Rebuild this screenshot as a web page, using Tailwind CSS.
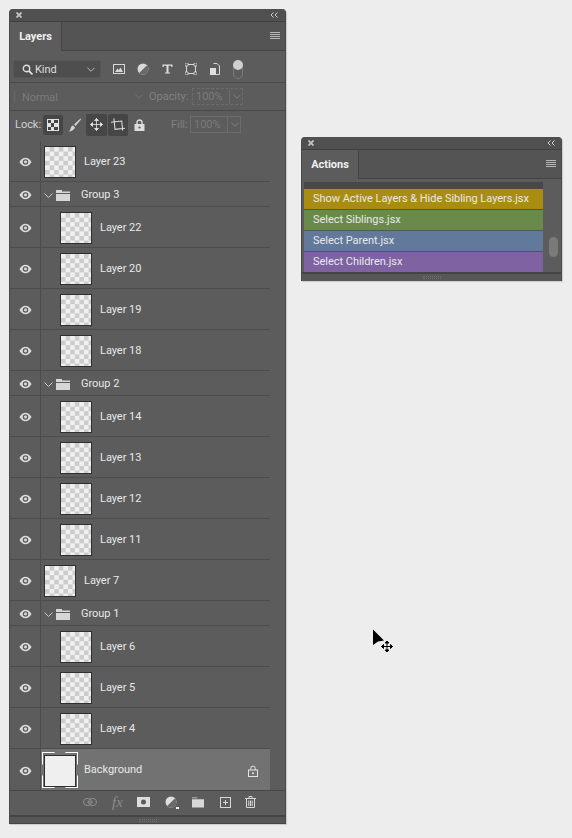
<!DOCTYPE html>
<html><head><meta charset="utf-8"><script src="https://cdn.jsdelivr.net/npm/@tailwindcss/browser@4"></script></head>
<body class="bg-[#ededed] w-[572px] h-[838px] overflow-hidden relative font-['Roboto','Liberation_Sans',sans-serif] text-[11px] tracking-[-0.03px] text-[#e8e8e8] [&_span]:translate-y-px">
<svg class="hidden"><defs>
<symbol id="eye" viewBox="0 0 14 10"><path d="M0.5 5C2.5 1.8 4.6 0.5 7 0.5S11.5 1.8 13.5 5C11.5 8.2 9.4 9.5 7 9.5S2.5 8.2 0.5 5Z" fill="#dcdcdc"/><circle cx="7" cy="5" r="3" fill="#5a5a5a"/><circle cx="7" cy="5" r="1.6" fill="#dcdcdc"/></symbol>
<symbol id="folder" viewBox="0 0 14 11"><path d="M0 0H6V1.5H14V3H0Z M0 4H14V11H0Z" fill="#d6d6d6"/></symbol>
<symbol id="chev" viewBox="0 0 9 5"><path d="M0.5 0.5L4.5 4.5L8.5 0.5" fill="none" stroke="#c8c8c8"/></symbol>
<symbol id="lines" viewBox="0 0 10 8"><path d="M0 .5H10M0 2.5H10M0 4.5H10M0 6.5H10" stroke="#b8b8b8"/></symbol>
<symbol id="x" viewBox="0 0 6 6"><path d="M.5 .5L5.5 5.5M5.5 .5L.5 5.5" stroke="#c4c4c4" stroke-width="1.8"/></symbol>
<symbol id="dbl" viewBox="0 0 8 6"><path d="M3.5 .5L1 3L3.5 5.5M7.5 .5L5 3L7.5 5.5" fill="none" stroke="#d0d0d0"/></symbol>
</defs></svg>

<!-- Layers panel -->
<div class="absolute left-[9px] top-[9px] w-[277px] h-[815px] rounded-t-[4px] bg-[#5c5c5c] border-x border-[#4a4a4a] shadow-[1px_1px_1px_#c9c9c9] flex flex-col overflow-hidden">
  <div class="h-[13px] shrink-0 bg-[#505050] border-b border-[#404040] flex items-center justify-between pl-[6px] pr-[7px]">
    <svg class="w-[6px] h-[6px]"><use href="#x"/></svg>
    <svg class="w-[8px] h-[6px]"><use href="#dbl"/></svg>
  </div>
  <div class="h-[29px] shrink-0 bg-[#545454] border-b border-[#444] flex items-stretch justify-between">
    <div class="w-[52px] -mb-px bg-[#5c5c5c] border-r border-[#444] flex items-center justify-center font-bold text-[#f0f0f0]"><span>Layers</span></div>
    <svg class="w-[10px] h-[8px] self-center mr-[5px]"><use href="#lines"/></svg>
  </div>
  <!-- filter row -->
  <div class="h-[32px] shrink-0 border-b border-[#494949] flex items-center pl-[3px] pt-[5px] relative">
    <div class="w-[88px] h-[18px] rounded-[2px] bg-[#4e4e4e] border border-[#575757] flex items-center pl-[8px] pr-[5px] text-[#dedede]">
      <svg class="w-[11px] h-[11px] mr-[2px]" viewBox="0 0 11 11"><circle cx="4.5" cy="4.5" r="3.2" fill="none" stroke="#ddd" stroke-width="1.4"/><path d="M7 7L10.5 10.5" stroke="#ddd" stroke-width="1.8"/></svg>
      <span>Kind</span>
      <svg class="w-[8px] h-[5px] ml-auto"><use href="#chev"/></svg>
    </div>
    <div class="flex items-center ml-[12px] gap-[12px]">
      <svg class="w-[12px] h-[10px]" viewBox="0 0 12 10"><rect x=".5" y=".5" width="11" height="9" fill="none" stroke="#d8d8d8"/><path d="M2 8L4.5 4.5L6 6L7.5 3.5L10 8Z" fill="#d8d8d8"/></svg>
      <svg class="w-[12px] h-[12px]" viewBox="0 0 12 12"><circle cx="6" cy="6" r="5.5" fill="#d8d8d8"/><path d="M10 2.2A5.5 5.5 0 0 1 2.2 10Z" fill="#6a6a6a"/></svg>
      <svg class="w-[11px] h-[10px] ml-[1px]" viewBox="0 0 11 10"><path d="M0.5 .5H10.5V3H9.5L9 1.8H6.5V8.4H8V9.5H3V8.4H4.5V1.8H2L1.5 3H.5Z" fill="#dedede"/></svg>
      <svg class="w-[12px] h-[12px]" viewBox="0 0 12 12"><rect x="1.5" y="1.5" width="9" height="9" fill="none" stroke="#d8d8d8"/><path d="M0 0H3V3H0ZM9 0H12V3H9ZM0 9H3V12H0ZM9 9H12V12H9Z" fill="#5b5b5b" stroke="#d8d8d8" stroke-width=".8"/></svg>
      <svg class="w-[10px] h-[12px] ml-[1px]" viewBox="0 0 10 12"><path d="M3.5 .5H7L9.5 3V11.5H4" fill="none" stroke="#d8d8d8"/><rect x="0" y="5" width="6" height="7" fill="#dedede"/></svg>
    </div>
    <div class="absolute left-[223px] top-[11px] w-[10px] h-[17px] rounded-full border border-[#7a7a7a]"></div>
    <div class="absolute left-[223px] top-[9px] w-[10px] h-[10px] rounded-full bg-[#d0d0d0]"></div>
  </div>
  <!-- blend row -->
  <div class="h-[28px] shrink-0 border-b border-[#494949] flex items-center pl-[4px] text-[#7b7b7b]">
    <div class="w-[126px] pl-[7px] border-l border-[#6a6a6a] leading-[12px]"><span class="inline-block">Normal</span></div>
    <svg class="w-[8px] h-[5px] -ml-[5px] shrink-0"><use href="#chev" opacity=".25"/></svg>
    <span class="ml-[6px] text-[#808080] w-[43px]">Opacity:</span>
    <div class="w-[51px] h-[17px] flex border border-dashed border-[#6c6c6c]"><div class="w-[37px] pl-[3px] leading-[15px] border-r border-[#6c6c6c]">100%</div><svg class="w-[8px] h-[5px] ml-[3px] self-center"><use href="#chev" opacity=".4"/></svg></div>
  </div>
  <!-- lock row -->
  <div class="h-[30px] shrink-0 flex items-center pl-[5px] pb-[3px] text-[#d2d2d2] relative">
    <span class="w-[27px]">Lock:</span>
    <div class="w-[20px] h-[20px] rounded-[2px] bg-[#464646] flex items-center justify-center ml-[1px]">
      <svg class="w-[12px] h-[12px]" viewBox="0 0 12 12"><rect width="12" height="12" fill="#e2e2e2"/><path d="M1 1H4V4H1ZM7 1H11V4H7ZM4 4H7V8H4ZM1 8H4V11H1ZM7 8H11V11H7Z" fill="#444"/></svg>
    </div>
    <svg class="w-[13px] h-[14px] ml-[5px]" viewBox="0 0 13 14"><path d="M12.5 .5L6 6.5L7.5 8L13 1.5Z M5 7.5L7 9.5C6 12 3 13.5 .5 13.5C2 12.5 2.5 11 3 9.5C3.3 8.5 4 7.8 5 7.5Z" fill="#d6d6d6"/></svg>
    <div class="w-[21px] h-[22px] rounded-[2px] bg-[#464646] flex items-center justify-center ml-[5px]">
      <svg class="w-[13px] h-[13px]" viewBox="0 0 13 13"><path d="M6.5 .5V12.5M.5 6.5H12.5M6.5 .5L4.5 2.5H8.5ZM6.5 12.5L4.5 10.5H8.5ZM.5 6.5L2.5 4.5V8.5ZM12.5 6.5L10.5 4.5V8.5Z" stroke="#e4e4e4" fill="#e4e4e4" stroke-width=".8"/></svg>
    </div>
    <div class="w-[20px] h-[22px] rounded-[2px] bg-[#464646] flex items-center justify-center ml-[1px]">
      <svg class="w-[14px] h-[13px]" viewBox="0 0 14 13"><path d="M3.5 0V11H14M0 3.5H11V13" fill="none" stroke="#e2e2e2" transform="rotate(-6 7 6)"/></svg>
    </div>
    <svg class="w-[11px] h-[12px] ml-[6px]" viewBox="0 0 11 12"><path d="M3 5V3.5A2.5 2.5 0 0 1 8 3.5V5" fill="none" stroke="#dedede" stroke-width="1.4"/><path d="M0.5 5H10.5V12H0.5Z" fill="#dedede"/><circle cx="5.5" cy="8.5" r="1.1" fill="#555"/></svg>
    <span class="absolute left-[161px] text-[#808080]">Fill:</span>
    <div class="absolute left-[180px] w-[51px] h-[17px] flex border border-[#6c6c6c] text-[#7b7b7b]"><div class="w-[37px] pl-[3px] leading-[15px] border-r border-[#6c6c6c]">100%</div><svg class="w-[8px] h-[5px] ml-[3px] self-center"><use href="#chev" opacity=".4"/></svg></div>
  </div>
  <!-- list -->
  <div class="h-[649px] shrink-0 flex flex-col w-[260px] [&_svg]:translate-y-px [&>div:not(:last-child)>div:nth-child(2)]:translate-y-px">
    <div class="h-[41px] shrink-0 border-b border-[#4c4c4c] flex items-center"><div class="w-[31px] h-full border-r border-[#4c4c4c] flex items-center justify-center"><svg class="w-[13px] h-[10px]"><use href="#eye"/></svg></div><div class="ml-[3px] w-[32px] h-[32px] border border-[#2f2f2f] bg-[repeating-conic-gradient(#cccccc_0_25%,#f0f0f0_0_50%)] bg-[length:9.2px_9.2px]"></div><span class="ml-[8px]">Layer 23</span></div>
    <div class="h-[25px] shrink-0 border-b border-[#4c4c4c] flex items-center"><div class="w-[31px] h-full border-r border-[#4c4c4c] flex items-center justify-center"><svg class="w-[13px] h-[10px]"><use href="#eye"/></svg></div><svg class="w-[9px] h-[5px] ml-[3px]"><use href="#chev"/></svg><svg class="w-[14px] h-[11px] ml-[3px]"><use href="#folder"/></svg><span class="ml-[11px]">Group 3</span></div>
    <div class="h-[41px] shrink-0 border-b border-[#4c4c4c] flex items-center"><div class="w-[31px] h-full border-r border-[#4c4c4c] flex items-center justify-center"><svg class="w-[13px] h-[10px]"><use href="#eye"/></svg></div><div class="ml-[19px] w-[32px] h-[32px] border border-[#2f2f2f] bg-[repeating-conic-gradient(#cccccc_0_25%,#f0f0f0_0_50%)] bg-[length:9.2px_9.2px]"></div><span class="ml-[8px]">Layer 22</span></div>
    <div class="h-[41px] shrink-0 border-b border-[#4c4c4c] flex items-center"><div class="w-[31px] h-full border-r border-[#4c4c4c] flex items-center justify-center"><svg class="w-[13px] h-[10px]"><use href="#eye"/></svg></div><div class="ml-[19px] w-[32px] h-[32px] border border-[#2f2f2f] bg-[repeating-conic-gradient(#cccccc_0_25%,#f0f0f0_0_50%)] bg-[length:9.2px_9.2px]"></div><span class="ml-[8px]">Layer 20</span></div>
    <div class="h-[41px] shrink-0 border-b border-[#4c4c4c] flex items-center"><div class="w-[31px] h-full border-r border-[#4c4c4c] flex items-center justify-center"><svg class="w-[13px] h-[10px]"><use href="#eye"/></svg></div><div class="ml-[19px] w-[32px] h-[32px] border border-[#2f2f2f] bg-[repeating-conic-gradient(#cccccc_0_25%,#f0f0f0_0_50%)] bg-[length:9.2px_9.2px]"></div><span class="ml-[8px]">Layer 19</span></div>
    <div class="h-[41px] shrink-0 border-b border-[#4c4c4c] flex items-center"><div class="w-[31px] h-full border-r border-[#4c4c4c] flex items-center justify-center"><svg class="w-[13px] h-[10px]"><use href="#eye"/></svg></div><div class="ml-[19px] w-[32px] h-[32px] border border-[#2f2f2f] bg-[repeating-conic-gradient(#cccccc_0_25%,#f0f0f0_0_50%)] bg-[length:9.2px_9.2px]"></div><span class="ml-[8px]">Layer 18</span></div>
    <div class="h-[25px] shrink-0 border-b border-[#4c4c4c] flex items-center"><div class="w-[31px] h-full border-r border-[#4c4c4c] flex items-center justify-center"><svg class="w-[13px] h-[10px]"><use href="#eye"/></svg></div><svg class="w-[9px] h-[5px] ml-[3px]"><use href="#chev"/></svg><svg class="w-[14px] h-[11px] ml-[3px]"><use href="#folder"/></svg><span class="ml-[11px]">Group 2</span></div>
    <div class="h-[41px] shrink-0 border-b border-[#4c4c4c] flex items-center"><div class="w-[31px] h-full border-r border-[#4c4c4c] flex items-center justify-center"><svg class="w-[13px] h-[10px]"><use href="#eye"/></svg></div><div class="ml-[19px] w-[32px] h-[32px] border border-[#2f2f2f] bg-[repeating-conic-gradient(#cccccc_0_25%,#f0f0f0_0_50%)] bg-[length:9.2px_9.2px]"></div><span class="ml-[8px]">Layer 14</span></div>
    <div class="h-[41px] shrink-0 border-b border-[#4c4c4c] flex items-center"><div class="w-[31px] h-full border-r border-[#4c4c4c] flex items-center justify-center"><svg class="w-[13px] h-[10px]"><use href="#eye"/></svg></div><div class="ml-[19px] w-[32px] h-[32px] border border-[#2f2f2f] bg-[repeating-conic-gradient(#cccccc_0_25%,#f0f0f0_0_50%)] bg-[length:9.2px_9.2px]"></div><span class="ml-[8px]">Layer 13</span></div>
    <div class="h-[41px] shrink-0 border-b border-[#4c4c4c] flex items-center"><div class="w-[31px] h-full border-r border-[#4c4c4c] flex items-center justify-center"><svg class="w-[13px] h-[10px]"><use href="#eye"/></svg></div><div class="ml-[19px] w-[32px] h-[32px] border border-[#2f2f2f] bg-[repeating-conic-gradient(#cccccc_0_25%,#f0f0f0_0_50%)] bg-[length:9.2px_9.2px]"></div><span class="ml-[8px]">Layer 12</span></div>
    <div class="h-[41px] shrink-0 border-b border-[#4c4c4c] flex items-center"><div class="w-[31px] h-full border-r border-[#4c4c4c] flex items-center justify-center"><svg class="w-[13px] h-[10px]"><use href="#eye"/></svg></div><div class="ml-[19px] w-[32px] h-[32px] border border-[#2f2f2f] bg-[repeating-conic-gradient(#cccccc_0_25%,#f0f0f0_0_50%)] bg-[length:9.2px_9.2px]"></div><span class="ml-[8px]">Layer 11</span></div>
    <div class="h-[41px] shrink-0 border-b border-[#4c4c4c] flex items-center"><div class="w-[31px] h-full border-r border-[#4c4c4c] flex items-center justify-center"><svg class="w-[13px] h-[10px]"><use href="#eye"/></svg></div><div class="ml-[3px] w-[32px] h-[32px] border border-[#2f2f2f] bg-[repeating-conic-gradient(#cccccc_0_25%,#f0f0f0_0_50%)] bg-[length:9.2px_9.2px]"></div><span class="ml-[8px]">Layer 7</span></div>
    <div class="h-[25px] shrink-0 border-b border-[#4c4c4c] flex items-center"><div class="w-[31px] h-full border-r border-[#4c4c4c] flex items-center justify-center"><svg class="w-[13px] h-[10px]"><use href="#eye"/></svg></div><svg class="w-[9px] h-[5px] ml-[3px]"><use href="#chev"/></svg><svg class="w-[14px] h-[11px] ml-[3px]"><use href="#folder"/></svg><span class="ml-[11px]">Group 1</span></div>
    <div class="h-[41px] shrink-0 border-b border-[#4c4c4c] flex items-center"><div class="w-[31px] h-full border-r border-[#4c4c4c] flex items-center justify-center"><svg class="w-[13px] h-[10px]"><use href="#eye"/></svg></div><div class="ml-[19px] w-[32px] h-[32px] border border-[#2f2f2f] bg-[repeating-conic-gradient(#cccccc_0_25%,#f0f0f0_0_50%)] bg-[length:9.2px_9.2px]"></div><span class="ml-[8px]">Layer 6</span></div>
    <div class="h-[41px] shrink-0 border-b border-[#4c4c4c] flex items-center"><div class="w-[31px] h-full border-r border-[#4c4c4c] flex items-center justify-center"><svg class="w-[13px] h-[10px]"><use href="#eye"/></svg></div><div class="ml-[19px] w-[32px] h-[32px] border border-[#2f2f2f] bg-[repeating-conic-gradient(#cccccc_0_25%,#f0f0f0_0_50%)] bg-[length:9.2px_9.2px]"></div><span class="ml-[8px]">Layer 5</span></div>
    <div class="h-[41px] shrink-0 border-b border-[#4c4c4c] flex items-center"><div class="w-[31px] h-full border-r border-[#4c4c4c] flex items-center justify-center"><svg class="w-[13px] h-[10px]"><use href="#eye"/></svg></div><div class="ml-[19px] w-[32px] h-[32px] border border-[#2f2f2f] bg-[repeating-conic-gradient(#cccccc_0_25%,#f0f0f0_0_50%)] bg-[length:9.2px_9.2px]"></div><span class="ml-[8px]">Layer 4</span></div>
    <div class="h-[41px] shrink-0 flex items-center relative"><div class="w-[31px] h-full border-r border-[#4c4c4c] flex items-center justify-center"><svg class="w-[13px] h-[10px]"><use href="#eye"/></svg></div><div class="flex-1 h-full bg-[#727272] flex items-center relative"><div class="ml-[3px] w-[32px] h-[32px] border border-[#2f2f2f] bg-[#efefef] translate-y-px"></div><div class="absolute left-[1px] top-[3px] w-[36px] h-[36px] border border-white [clip-path:polygon(0_0,35%_0,35%_8%,65%_8%,65%_0,100%_0,100%_35%,92%_35%,92%_65%,100%_65%,100%_100%,65%_100%,65%_92%,35%_92%,35%_100%,0_100%,0_65%,8%_65%,8%_35%,0_35%)]"></div><span class="ml-[8px]">Background</span><svg class="absolute right-[12px] top-[15px] w-[10px] h-[12px]" viewBox="0 0 10 12"><path d="M2.8 5V3.2A2.2 2.2 0 0 1 7.2 3.2V5" fill="none" stroke="#e4e4e4"/><rect x=".5" y="5" width="9" height="6.5" fill="none" stroke="#e4e4e4"/><circle cx="5" cy="8.2" r="1" fill="#e4e4e4"/></svg></div></div>
  </div>
  <!-- footer -->
  <div class="h-[25px] shrink-0 border-t border-[#464646] flex items-center pl-[73px] pb-[2px]">
    <svg class="w-[14px] h-[8px]" viewBox="0 0 14 8"><rect x=".5" y=".5" width="8" height="7" rx="3.5" fill="none" stroke="#8c8c8c"/><rect x="5.5" y=".5" width="8" height="7" rx="3.5" fill="none" stroke="#8c8c8c"/><path d="M4 4H10" stroke="#8c8c8c"/></svg>
    <div class="ml-[15px] w-[14px] italic text-[15px] leading-none text-[#8c8c8c] font-['Liberation_Serif',serif]">fx</div>
    <svg class="ml-[11px] w-[13px] h-[10px]" viewBox="0 0 13 10"><path fill-rule="evenodd" d="M0 0H13V10H0ZM6.5 2.5A2.5 2.5 0 1 0 6.5 7.5A2.5 2.5 0 1 0 6.5 2.5Z" fill="#dedede"/></svg>
    <svg class="w-[15px] h-[13px] ml-[15px]" viewBox="0 0 15 13"><circle cx="6" cy="6" r="5.5" fill="#dedede"/><path d="M10 2.2A5.5 5.5 0 0 1 2.2 10Z" fill="#6a6a6a"/><rect x="11" y="11" width="3" height="2" fill="#eee"/></svg>
    <svg class="w-[12px] h-[11px] ml-[12px]" viewBox="0 0 13 11"><path d="M0 0H6V1H0ZM0 2H13V11H0Z" fill="#d8d8d8"/></svg>
    <svg class="w-[11px] h-[11px] ml-[16px]" viewBox="0 0 11 11"><rect x=".5" y=".5" width="10" height="10" fill="none" stroke="#d8d8d8"/><path d="M5.5 3V8M3 5.5H8" stroke="#d8d8d8"/></svg>
    <svg class="w-[11px] h-[12px] ml-[14px]" viewBox="0 0 11 12"><path d="M0 2.5H11M4 2V.5H7V2M1.5 3V11.5H9.5V3M3.8 4.5V10M5.5 4.5V10M7.2 4.5V10" fill="none" stroke="#d8d8d8"/></svg>
  </div>
  <div class="h-[8px] shrink-0 border-t-2 border-[#444] bg-[#575757] flex justify-center items-center"><div class="w-[18px] h-[3px] border-y border-dotted border-[#6e6e6e]"></div></div>
  <div class="h-px shrink-0 bg-[#444]"></div>
</div>

<!-- Actions panel -->
<div class="absolute left-[301px] top-[137px] w-[261px] h-[144px] rounded-t-[4px] bg-[#5c5c5c] border-x border-[#4a4a4a] shadow-[1px_1px_1px_#c9c9c9] flex flex-col overflow-hidden">
  <div class="h-[13px] shrink-0 bg-[#505050] border-b border-[#404040] flex items-center justify-between pl-[6px] pr-[6px]">
    <svg class="w-[6px] h-[6px]"><use href="#x"/></svg>
    <svg class="w-[8px] h-[6px]"><use href="#dbl"/></svg>
  </div>
  <div class="h-[29px] shrink-0 bg-[#545454] border-b border-[#444] flex items-stretch justify-between">
    <div class="w-[57px] -mb-px bg-[#5c5c5c] border-r border-[#444] flex items-center justify-center font-bold text-[#f0f0f0]"><span>Actions</span></div>
    <svg class="w-[10px] h-[8px] self-center mr-[5px]"><use href="#lines"/></svg>
  </div>
  <div class="flex-1 min-h-0 flex pl-[2px] relative">
    <div class="w-[239px] pt-[3px] whitespace-nowrap">
      <div class="h-[7px] bg-[#484848]"></div>
      <div class="h-[21px] bg-[#a98d12] border-b border-[#50554a] pl-[9px] leading-[19px]">Show Active Layers &amp; Hide Sibling Layers.jsx</div>
      <div class="h-[21px] bg-[#6a8a4c] border-b border-[#4f5860] pl-[9px] leading-[19px]">Select Siblings.jsx</div>
      <div class="h-[21px] bg-[#63799c] border-b border-[#4f4f66] pl-[9px] leading-[19px]">Select Parent.jsx</div>
      <div class="h-[20px] bg-[#7e62a2] pl-[9px] leading-[19px]">Select Children.jsx</div>
    </div>
    <div class="absolute left-[247px] top-[58px] w-[9px] h-[20px] rounded-full bg-[#7a7a7a]"></div>
  </div>
  <div class="h-[9px] shrink-0 border-t-2 border-[#444] bg-[#575757] flex justify-center items-center"><div class="w-[18px] h-[3px] border-y border-dotted border-[#6e6e6e]"></div></div>
</div>

<!-- cursor -->
<svg class="absolute left-[372px] top-[629px] w-[22px] h-[24px]" viewBox="0 0 22 24"><path d="M1 0.5V16L6 12.5L12 11.5Z" fill="#000"/><path d="M15 12V23M9.5 17.5H20.5M15 12L13 14H17ZM15 23L13 21H17ZM9.5 17.5L11.5 15.5V19.5ZM20.5 17.5L18.5 15.5V19.5Z" stroke="#000" fill="#000"/></svg>
</body></html>
